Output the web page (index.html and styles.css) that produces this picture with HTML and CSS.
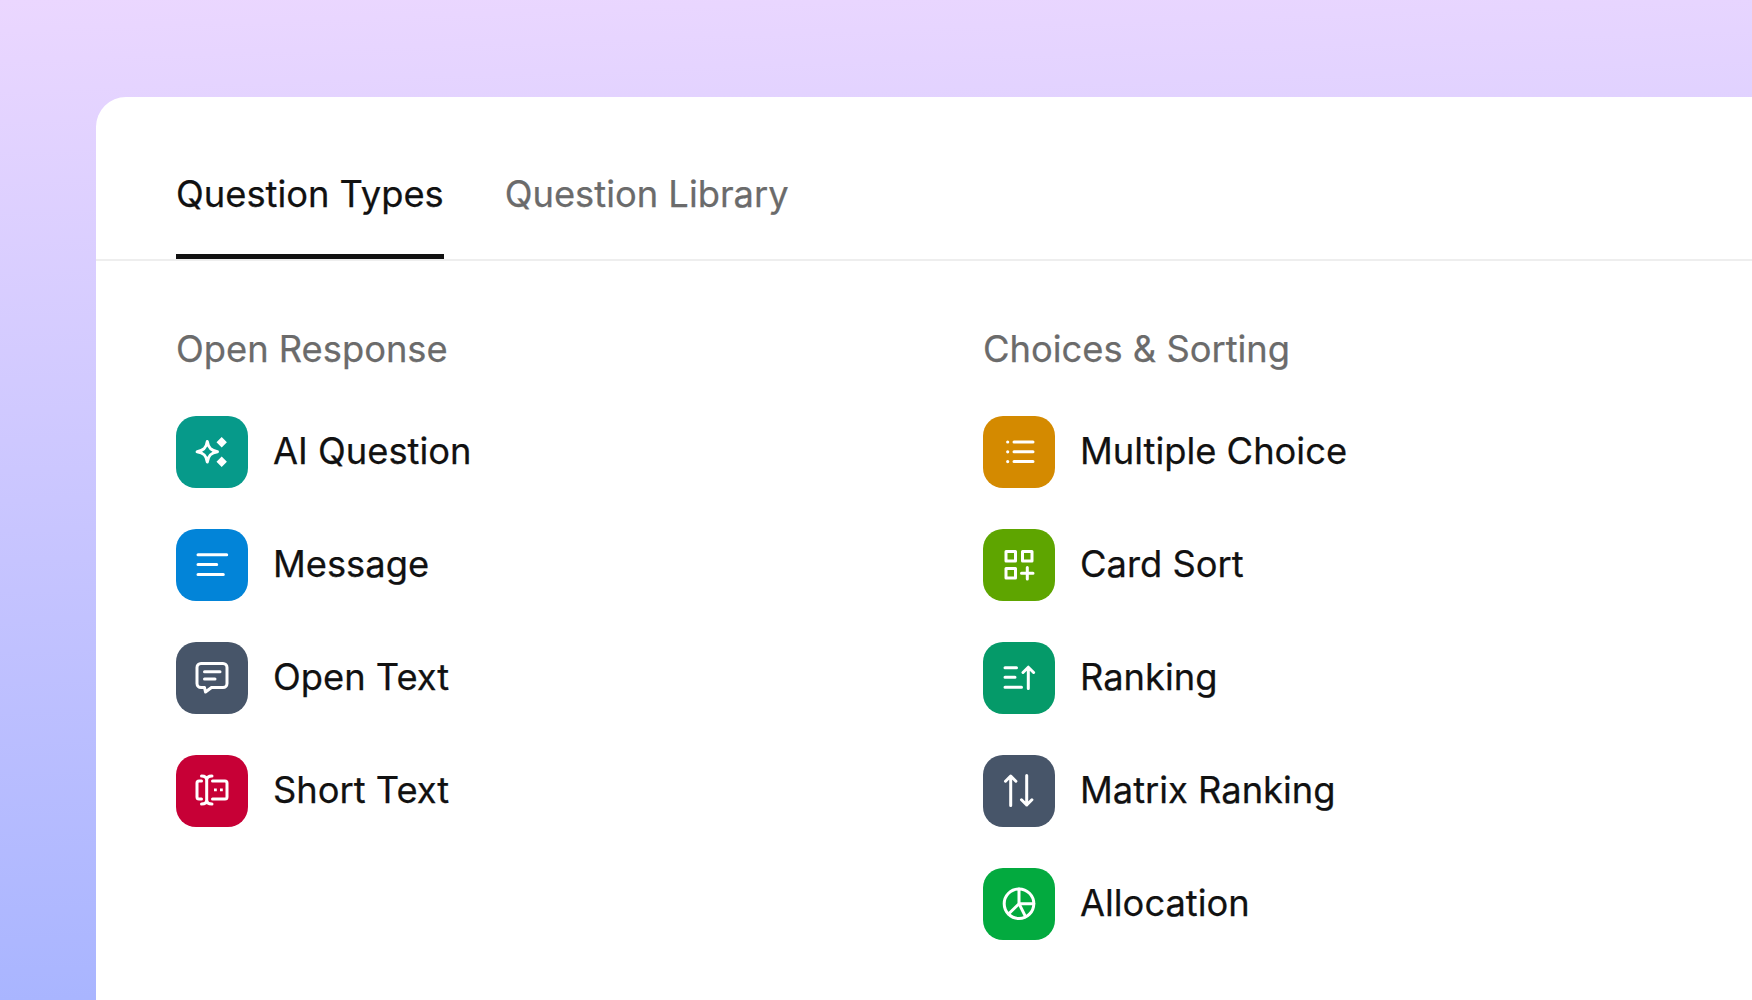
FILE: index.html
```html
<!DOCTYPE html>
<html>
	<head>
		<meta charset="UTF-8">
		<title>Question Types</title>
		<link rel="stylesheet" href="styles.css">
	</head>
	<body>
		<div class="card">
			<div class="tabs">
				<a class="tab tab-active">Question Types</a>
				<a class="tab">Question Library</a>
			</div>
			<div class="columns">
				<div class="group">
					<h2 class="group-title">Open Response</h2>
					<div class="item">
						<span class="icon bg-teal">
							<svg viewBox="0 0 72 72">
								<path d="M31.300 25.500c1 6.500 3.700 9.200 10.200 10.200-6.500 1-9.200 3.700-10.200 10.200-1-6.500-3.700-9.200-10.200-10.200 6.500-1 9.200-3.700 10.200-10.200z"/>
								<path class="solid" d="M45.700 21l5.200 5.300-5.200 5.300-5.200-5.300zM45.700 40.500l5.200 5.300-5.200 5.300-5.200-5.300z"/>
							</svg>
						</span>
						<span class="item-name">AI Question</span>
					</div>
					<div class="item">
						<span class="icon bg-blue">
							<svg viewBox="0 0 72 72">
								<path d="M22 25.700h28.700M22 35.600h18.700M22 45.400h25.300"/>
							</svg>
						</span>
						<span class="item-name">Message</span>
					</div>
					<div class="item">
						<span class="icon bg-slate">
							<svg viewBox="0 0 72 72">
								<path d="M25 21.500h22a4 4 0 0 1 4 4v16a4 4 0 0 1-4 4H35.500l-6 4.500-1-4.500H25a4 4 0 0 1-4-4v-16a4 4 0 0 1 4-4z"/>
								<path d="M28.500 29.700h15.500M28.500 37h10.500"/>
							</svg>
						</span>
						<span class="item-name">Open Text</span>
					</div>
					<div class="item">
						<span class="icon bg-red">
							<svg viewBox="0 0 72 72">
								<path d="M25.500 26h-2.500a2 2 0 0 0-2 2v14a2 2 0 0 0 2 2h2.500M36.500 26H49a2 2 0 0 1 2 2v14a2 2 0 0 1-2 2H36.500"/>
								<path d="M25.500 21c3 0 5.200 1 5.200 4v20c0 3-2.200 4-5.200 4M36 21c-3 0-5.300 1-5.300 4v20c0 3 2.300 4 5.300 4"/>
								<path class="solid" d="M38 33.500h2.800v2.800H38zM44 33.500h2.800v2.800H44z"/>
							</svg>
						</span>
						<span class="item-name">Short Text</span>
					</div>
				</div>
				<div class="group">
					<h2 class="group-title">Choices &amp; Sorting</h2>
					<div class="item">
						<span class="icon bg-orange">
							<svg viewBox="0 0 72 72">
								<path d="M31 26h19M31 35.800h19M31 45.600h19"/>
								<path class="solid" d="M24.700 24.400a1.600 1.600 0 1 1 0 3.200 1.600 1.600 0 0 1 0-3.200zM24.700 34.200a1.600 1.600 0 1 1 0 3.200 1.600 1.600 0 0 1 0-3.200zM24.700 44a1.600 1.600 0 1 1 0 3.200 1.600 1.600 0 0 1 0-3.200z"/>
							</svg>
						</span>
						<span class="item-name">Multiple Choice</span>
					</div>
					<div class="item">
						<span class="icon bg-lime">
							<svg viewBox="0 0 72 72">
								<path d="M23 22.500h9.500V32H23zM39.500 22.500H49V32h-9.500zM23 39.500h9.500V49H23zM44.300 38.500v11.500M38.500 44.300H50"/>
							</svg>
						</span>
						<span class="item-name">Card Sort</span>
					</div>
					<div class="item">
						<span class="icon bg-green">
							<svg viewBox="0 0 72 72">
								<path d="M22 25.700h11.500M22 35.300h10M22 45.300h16.500M45.300 46.500V25.500M40 30.500l5.300-5.300 5.300 5.300"/>
							</svg>
						</span>
						<span class="item-name">Ranking</span>
					</div>
					<div class="item">
						<span class="icon bg-slate">
							<svg viewBox="0 0 72 72">
								<path d="M27.700 50.500V21M22.500 26.200l5.200-5.200 5.200 5.200M43.700 20.500V50M38.500 44.800l5.200 5.200 5.200-5.200"/>
							</svg>
						</span>
						<span class="item-name">Matrix Ranking</span>
					</div>
					<div class="item">
						<span class="icon bg-leaf">
							<svg viewBox="0 0 72 72">
								<circle cx="36" cy="35.700" r="14.800"/>
								<path d="M36 21v14.700H50.800M36 35.700L25.500 46M36 35.700l6.500 13"/>
							</svg>
						</span>
						<span class="item-name">Allocation</span>
					</div>
				</div>
			</div>
		</div>
	</body>
</html>
```

FILE: styles.css
```css
html, body {
	margin: 0;
	padding: 0;
	height: 1000px;
	overflow: hidden;
}
body {
	padding: 97px 0 0 96px;
	box-sizing: border-box;
	background: linear-gradient(178deg, #ebd7ff 0%, #a5b3ff 100%);
	font-family: Inter, "Liberation Sans", sans-serif;
}
.card {
	height: 903px;
	background: #fff;
	border-radius: 30px 0 0 0;
	overflow: hidden;
}
.tabs {
	display: flex;
	gap: 61px;
	height: 164px;
	box-sizing: border-box;
	padding-left: 80px;
	border-bottom: 2px solid #eeeeee;
}
.tab {
	height: 162px;
	box-sizing: border-box;
	padding-top: 75px;
	font-size: 36.3px;
	line-height: 44px;
	-webkit-text-stroke: 0.25px currentColor;
	color: #6b6b6b;
}
.tab-active {
	color: #111;
	border-bottom: 5px solid #111;
}
.columns {
	display: grid;
	grid-template-columns: 807px 1fr;
	padding: 66px 0 0 80px;
}
.group-title {
	margin: 0 0 45px 0;
	font-size: 36.3px;
	line-height: 44px;
	font-weight: 400;
	-webkit-text-stroke: 0.25px currentColor;
	color: #6b6b6b;
}
.item {
	display: flex;
	align-items: center;
	gap: 25px;
	height: 72px;
	margin-bottom: 41px;
}
.item-name {
	padding-bottom: 2px;
	font-size: 36.3px;
	line-height: 44px;
	-webkit-text-stroke: 0.25px currentColor;
	color: #111;
}
.icon {
	display: block;
	width: 72px;
	height: 72px;
	border-radius: 20px;
}
.icon svg {
	display: block;
	width: 72px;
	height: 72px;
	fill: none;
	stroke: #fff;
	stroke-width: 3;
	stroke-linecap: round;
	stroke-linejoin: round;
}
.icon svg .solid {
	fill: #fff;
	stroke: none;
}
.bg-teal { background: #069a8a; }
.bg-blue { background: #0284d8; }
.bg-slate { background: #475569; }
.bg-red { background: #c70036; }
.bg-orange { background: #d48a00; }
.bg-lime { background: #5ea500; }
.bg-green { background: #059a69; }
.bg-leaf { background: #03aa3f; }
```
